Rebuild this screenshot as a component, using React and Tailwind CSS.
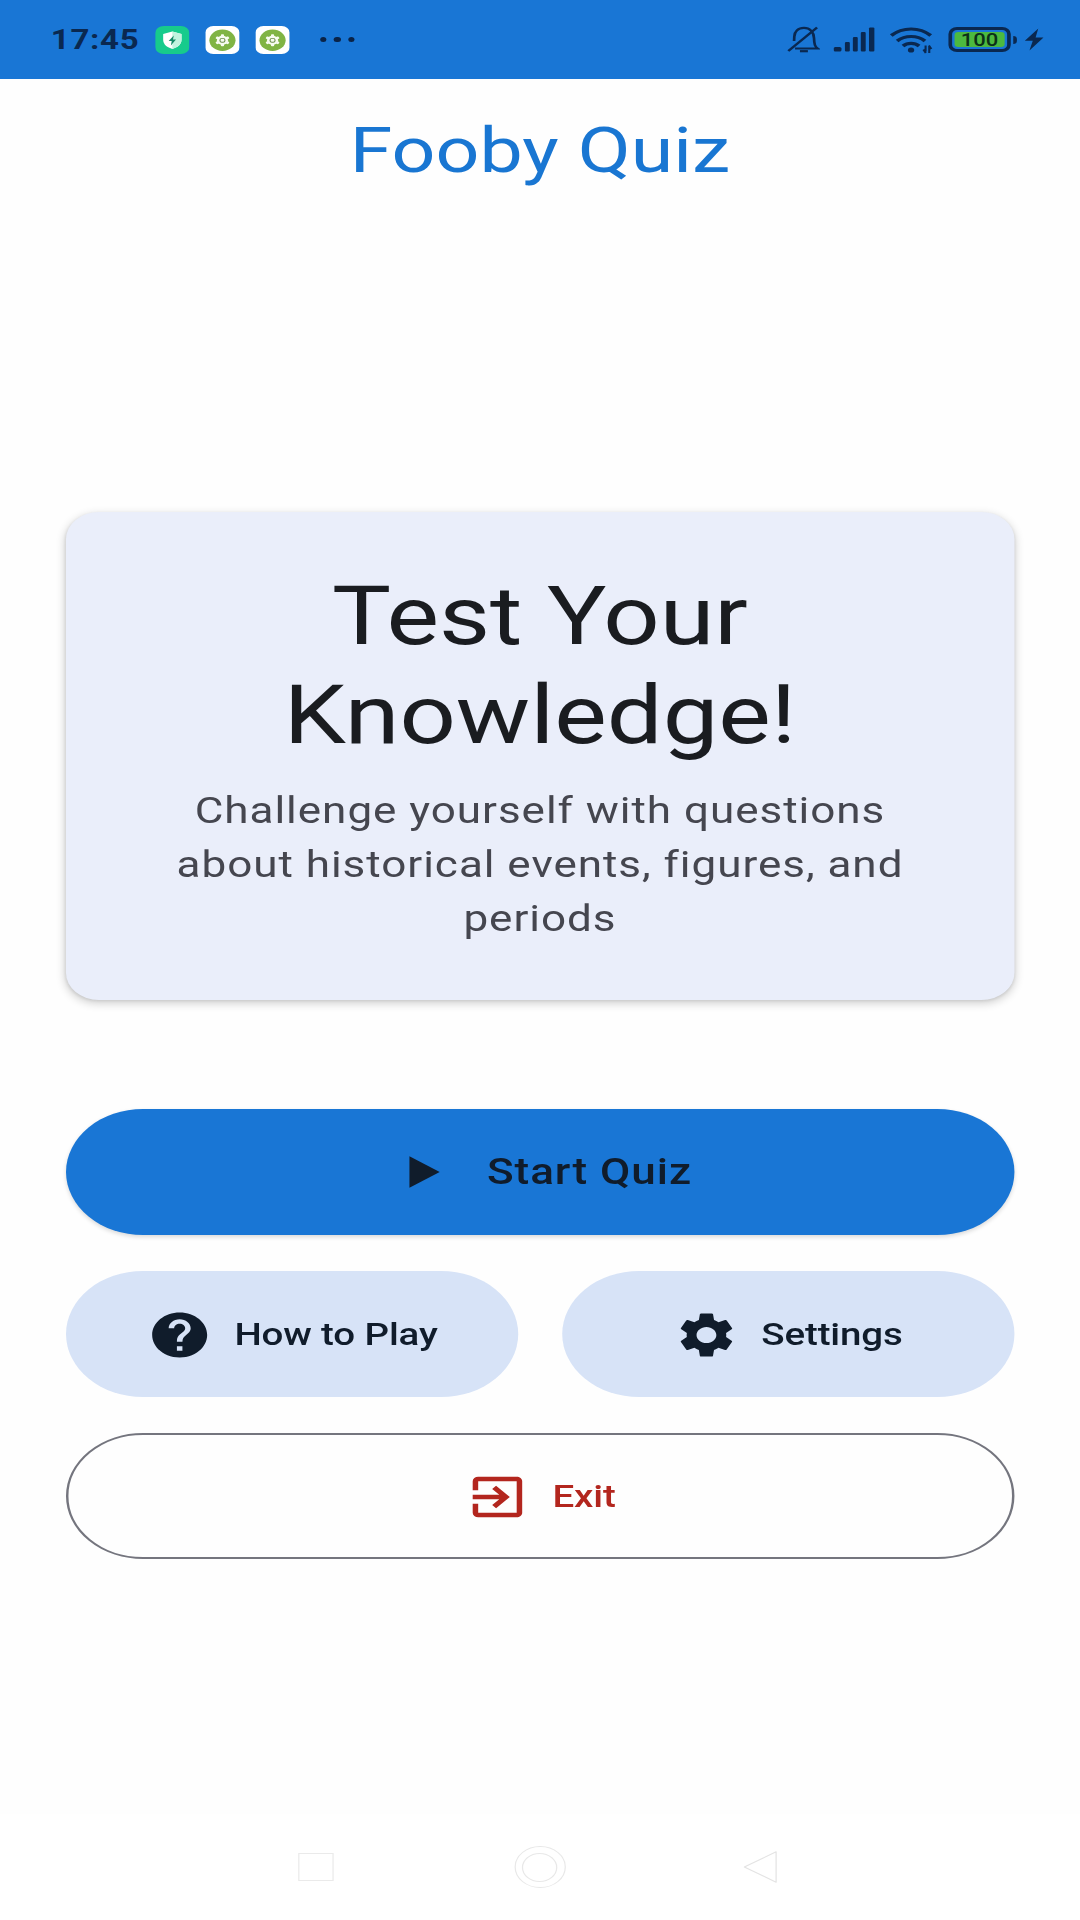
import React from 'react';
import { MdExitToApp, MdHelp, MdPlayArrow, MdSettings } from 'react-icons/md';

function SecurityIcon() {
  return (
    <svg className="size-7" viewBox="0 0 28 28">
      <rect width="28" height="28" rx="7" fill="#17cb8c" />
      <path d="M14 5.5 L21.5 8 V14 C21.5 18.5 18 21.5 14 23 C10 21.5 6.5 18.5 6.5 14 V8 Z" fill="#fff" />
      <path d="M14 5.5 L21.5 8 V14 C21.5 18.5 18 21.5 14 23 Z" fill="#c2f3df" />
      <path d="M15.2 9.5 L11 15 H13.5 L12.8 19.5 L17 13.5 H14.5 Z" fill="#158a68" />
    </svg>
  );
}

function GearAppIcon() {
  return (
    <svg className="size-7" viewBox="0 0 28 28">
      <rect width="28" height="28" rx="6.5" fill="#fff" />
      <circle cx="14" cy="14.3" r="10.7" fill="#80b444" />
      <g fill="#f7fbf0">
        <circle cx="14" cy="14.3" r="4.5" />
        <rect x="12.7" y="8.3" width="2.6" height="12" rx="0.8" />
        <rect x="12.7" y="8.3" width="2.6" height="12" rx="0.8" transform="rotate(60 14 14.3)" />
        <rect x="12.7" y="8.3" width="2.6" height="12" rx="0.8" transform="rotate(120 14 14.3)" />
      </g>
      <rect x="12" y="12.4" width="4" height="3.8" rx="1.5" fill="none" stroke="#6b8f4a" strokeWidth="0.9" />
    </svg>
  );
}

function MutedBellIcon() {
  return (
    <svg className="h-[27px] w-[27px]" viewBox="0 0 27 27" fill="none" stroke="#0a2850" strokeWidth="2.2">
      <path d="M6.5 22.5 H25 C22.8 20.5 22.2 18.5 22 12 C21.800 6 18.500 1.800 13.800 1.800 C9 1.800 6.200 5.500 5.900 10.500 L5.700 15" />
      <path d="M1 25 L24.5 1.5" />
      <path d="M10.5 25.2 H17" />
    </svg>
  );
}

function SignalIcon() {
  return (
    <svg className="ml-[11px] h-[25px] w-[34px]" viewBox="0 0 34 25" fill="#0a2850">
      <rect x="0" y="20" width="6.5" height="4.5" rx="1.5" />
      <rect x="9.3" y="15" width="4" height="9.5" rx="1" />
      <rect x="15.8" y="10" width="4" height="14.5" rx="1" />
      <rect x="22.3" y="5" width="4" height="19.5" rx="1" />
      <rect x="29" y="0.5" width="4.4" height="24" rx="1" />
    </svg>
  );
}

function WifiIcon() {
  return (
    <svg className="ml-[12px] h-[28px] w-[36px]" viewBox="0 0 36 28" fill="none" stroke="#0a2850" strokeWidth="3.2">
      <path d="M1.2 9.5 C10.5 0.8 24.5 0.8 33.5 9.5" />
      <path d="M6 15 C12.5 9 22.5 9 28.8 15" />
      <path d="M10.8 20 C14.5 16.5 20.3 16.5 24 20" />
      <circle cx="17.4" cy="24" r="2.6" fill="#0a2850" stroke="none" />
      <path d="M29.3 19.5 V25.5 M27.5 23.5 L29.5 27 M32.3 27 V20.5 M34 23 L32 19.5" strokeWidth="1.7" />
    </svg>
  );
}

function Battery() {
  return (
    <div className="ml-[12px] flex items-center gap-[2px]">
      <div className="flex h-[25px] w-[50.5px] items-center rounded-[7px] border-[3px] border-[#0a2850] p-[2px]">
        <div className="flex h-full w-full items-center justify-center rounded-[3px] bg-[#4cb93f] text-[18px] leading-none font-medium text-[#0b3018]">
          100
        </div>
      </div>
      <div className="h-[8px] w-[3px] rounded-r-sm bg-[#0a2850]" />
    </div>
  );
}

function StatusBar() {
  return (
    <div className="flex h-[79px] items-center bg-[#1976d5] pr-[30px] pl-[41.5px]">
      <span className="w-[85.6px] pt-[2px] text-[27px] leading-none font-bold tracking-[0.6px] text-[#0a2850]">17:45</span>
      <div className="flex gap-[13px]">
        <SecurityIcon />
        <GearAppIcon />
        <GearAppIcon />
      </div>
      <div className="ml-[24.5px] flex gap-[6px]">
        <span className="size-[5.5px] rounded-full bg-[#0a2347]" />
        <span className="size-[5.5px] rounded-full bg-[#0a2347]" />
        <span className="size-[5.5px] rounded-full bg-[#0a2347]" />
      </div>
      <div className="ml-auto flex items-center">
        <MutedBellIcon />
        <SignalIcon />
        <WifiIcon />
        <Battery />
        <svg className="ml-[6px] h-[23px] w-[16px]" viewBox="0 0 16 23" fill="#0a2850">
          <path d="M11.5 0.5 L0.5 12.8 H7 L4.3 22.5 L15.8 9.5 H9.3 Z" />
        </svg>
      </div>
    </div>
  );
}

function NavBar() {
  return (
    <div className="flex h-[106px] items-center bg-white pl-[244px]">
      <div className="h-[28px] w-[29px] border border-[#eaeaea]" />
      <div className="ml-[147.5px] flex size-[42px] items-center justify-center rounded-full border border-[#e8e8e8]">
        <div className="size-[29px] rounded-full border border-[#e8e8e8]" />
      </div>
      <svg className="ml-[145px] h-[32px] w-[28px]" viewBox="0 0 28 32" fill="none" stroke="#e4e4e4" strokeLinejoin="round">
        <path d="M1 16 L27 0.8 V31.2 Z" />
      </svg>
    </div>
  );
}

function App() {
  return (
    <div className="h-[1920px] w-[1080px] overflow-hidden bg-[#fefefe]">
      <div className="flex h-[1920px] w-[883.636px] origin-top-left scale-x-[1.22222] flex-col font-[Roboto,sans-serif]">
        <StatusBar />

        <header className="flex h-[143px] items-center justify-center">
          <h1 className="text-[63px] leading-none text-[#1976d2]">Fooby Quiz</h1>
        </header>

        <main className="flex flex-1 flex-col px-[54px] pt-[290px]">
          <section className="rounded-[27px] bg-[#eaeefa] px-[54px] pt-[55px] pb-[54px] text-center shadow-[0_3px_9px_rgba(0,0,0,0.2),0_1px_3px_rgba(0,0,0,0.08)]">
            <h2 className="text-[81px] leading-[99px] text-[#1a1c20]">
              Test Your
              <br />
              Knowledge!
            </h2>
            <p className="mt-[19px] text-[36px] leading-[54px] tracking-[0.8px] text-[#45464f]">
              Challenge yourself with questions
              <br />
              about historical events, figures, and
              <br />
              periods
            </p>
          </section>

          <div className="mt-[109px] flex flex-col gap-9">
            <button className="flex h-[126px] items-center justify-center gap-[27px] rounded-full bg-[#1976d5] text-[36px] font-medium tracking-[0.8px] text-[#101c2b] shadow-[0_2px_4px_rgba(0,0,0,0.15)]">
              <MdPlayArrow className="size-[54px]" />
              Start Quiz
            </button>
            <div className="grid grid-cols-2 gap-9">
              <button className="flex h-[126px] items-center justify-center gap-[18px] rounded-full bg-[#d7e3f7] pt-px text-[31.5px] font-medium tracking-[-0.12px] text-[#101c2b]">
                <MdHelp className="size-[54px]" />
                How to Play
              </button>
              <button className="flex h-[126px] items-center justify-center gap-[18px] rounded-full bg-[#d7e3f7] pt-px text-[31.5px] font-medium tracking-[-0.12px] text-[#101c2b]">
                <MdSettings className="size-[54px]" />
                Settings
              </button>
            </div>
            <button className="flex h-[126px] items-center justify-center gap-[18px] rounded-full border-2 border-[#74757e] pt-px text-[31.5px] font-medium tracking-[-0.12px] text-[#b3261e]">
              <MdExitToApp className="size-[54px]" />
              Exit
            </button>
          </div>
        </main>

        <NavBar />
      </div>
    </div>
  );
}

export default App;
